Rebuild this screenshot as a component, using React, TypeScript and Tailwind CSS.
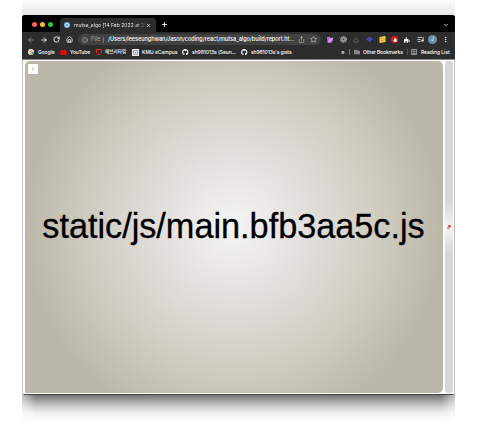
import type { ReactNode } from 'react';
import { FaGithub, FaYoutube, FaFolder, FaPuzzlePiece, FaHandPaper } from 'react-icons/fa';
import { FcGoogle } from 'react-icons/fc';
import { ArrowLeft, ArrowRight, RotateCw, House, Info, Share, Star, ChevronDown, ChevronRight, X, Plus, Aperture, Triangle, ListMusic, EllipsisVertical } from 'lucide-react';

function Cell({ w, children }: { w: string; children?: ReactNode }) {
  return <div className={`${w} flex h-full shrink-0 items-center overflow-visible whitespace-nowrap`}>{children}</div>;
}

function TabStrip() {
  return (
    <div className="flex h-[17px] bg-black pl-[10px] pr-[6px]">
      <div className="flex w-[28px] items-center gap-[3px] pt-px">
        <span className="size-[5px] rounded-full bg-[#ff5f57]" />
        <span className="size-[5px] rounded-full bg-[#febc2e]" />
        <span className="size-[5px] rounded-full bg-[#28c840]" />
      </div>
      <div className="mt-[3px] flex h-[14px] w-[96px] items-center rounded-t-[3px] bg-[#2d2d2d] pl-[4px]">
        <svg className="size-[6px] shrink-0" viewBox="0 0 12 12">
          <circle cx="6" cy="6" r="6" fill="#65b4ef" />
          <path d="M6 2L9.5 4v4L6 10L2.5 8V4Z" fill="#e8f7ff" />
          <path d="M6 4L8 5v2L6 8L4 7V5Z" fill="#1787c8" />
        </svg>
        <span className="ml-[4px] w-[72px] whitespace-nowrap bg-linear-to-r from-white from-85% to-[#444] bg-clip-text text-[5.1px] leading-[8px] tracking-[-0.02px] text-transparent">mutsa_algo [14 Feb 2022 at 20</span>
        <X className="size-[5px] shrink-0 text-white" strokeWidth={3} />
      </div>
      <Plus className="ml-[5px] mt-[6px] size-[7px] text-white" strokeWidth={3} />
      <ChevronDown className="ml-auto mt-[7px] size-[6px] text-white" strokeWidth={3} />
    </div>
  );
}

function Toolbar() {
  return (
    <div className="flex h-[15px] items-center pl-[5px] text-white">
      <Cell w="w-[13px]"><ArrowLeft className="size-[8px] text-[#929292]" strokeWidth={2.5} /></Cell>
      <Cell w="w-[13px]"><ArrowRight className="size-[8px]" strokeWidth={2.5} /></Cell>
      <Cell w="w-[13px]"><RotateCw className="size-[7px]" strokeWidth={2.8} /></Cell>
      <Cell w="w-[12px]"><House className="size-[7px]" strokeWidth={2.5} /></Cell>
      <div className="flex h-[11px] w-[243px] shrink-0 items-center rounded-full bg-[#414141] pl-[4px] text-[5.5px] whitespace-nowrap">
        <Cell w="w-[9px]"><Info className="size-[6px] text-[#c0c0c0]" strokeWidth={2.2} /></Cell>
        <Cell w="w-[12px]"><span className="text-[#aaa]">File</span></Cell>
        <span className="h-[6px] w-px bg-[#777]" />
        <span className="ml-[4px] w-[189px] font-medium tracking-[-0.02px]">/Users/leeseunghwan/Jason/coding/react/mutsa_algo/build/report.ht...</span>
        <Share className="ml-px size-[7px] shrink-0 text-[#ccc]" strokeWidth={2} />
        <Star className="ml-[5px] size-[7px] shrink-0 text-[#ddd]" strokeWidth={2.2} />
      </div>
      <div className="ml-[6px] flex items-center">
        <Cell w="w-[13px]">
          <svg className="size-[6px]" viewBox="0 0 12 12"><path d="M0 0h6l1 3 5-2v6L8 12H1Z" fill="#ad73ed" /><path d="M7 3l5-2-4 6-7 4Z" fill="#f4b3f5" /></svg>
        </Cell>
        <Cell w="w-[13px]"><Aperture className="size-[7px] text-[#c8c8c8]" strokeWidth={2.2} /></Cell>
        <Cell w="w-[12.5px]"><Triangle className="size-[6px] text-[#777]" strokeWidth={3} /></Cell>
        <Cell w="w-[13px]"><svg className="size-[7px]" viewBox="0 0 14 14"><path d="M7 1l7 5-7 7-7-7Z" fill="#384cb2" /></svg></Cell>
        <Cell w="w-[12.5px]"><svg className="size-[7px]" viewBox="0 0 14 14"><path d="M1 2L13 0v12L1 14Z" fill="#f3cf48" /><path d="M3 5h4m-3 5 7-3" stroke="#ad8c21" strokeWidth="1.5" /></svg></Cell>
        <Cell w="w-[13px]"><span className="flex size-[7px] items-center justify-center rounded-full bg-[#f01414]"><FaHandPaper className="size-[4px]" /></span></Cell>
        <Cell w="w-[13px]"><FaPuzzlePiece className="size-[6px]" /></Cell>
        <Cell w="w-[11px]"><ListMusic className="size-[7px]" strokeWidth={2.5} /></Cell>
        <Cell w="w-[14px]"><span className="flex size-[9px] items-center justify-center rounded-full bg-[#718e9c] text-[5px]">J</span></Cell>
        <Cell w="w-[8px]"><EllipsisVertical className="size-[7px]" strokeWidth={2.5} /></Cell>
      </div>
    </div>
  );
}

function Bookmarks() {
  return (
    <div className="flex h-[11px] items-center pb-px pl-[6px] text-[5px] font-medium leading-[8px] text-white">
      <Cell w="w-[10px]"><span className="flex size-[6px] items-center justify-center rounded-full bg-white"><FcGoogle className="size-[5px]" /></span></Cell>
      <Cell w="w-[22px]"><span className="tracking-[-0.1px]">Google</span></Cell>
      <Cell w="w-[10px]"><FaYoutube className="size-[7px] text-[#f00]" /></Cell>
      <Cell w="w-[26px]"><span className="tracking-[-0.1px]">YouTube</span></Cell>
      <Cell w="w-[9px]"><svg className="size-[6px]" viewBox="0 0 12 12"><path d="M1 1h10v7L6 12L1 8Z" fill="#541e19" stroke="#d32f22" strokeWidth="2" /></svg></Cell>
      <Cell w="w-[27px]"><span className="text-[4.6px]">에브리타임</span></Cell>
      <Cell w="w-[10px]"><svg className="size-[7px]" viewBox="0 0 14 14"><path d="M0 0h14v14H0Z" fill="#ededed" /><path d="M3 3h8v8H3ZM5 5l4 4m0-4L5 9" fill="none" stroke="#777" strokeWidth="1.2" /></svg></Cell>
      <Cell w="w-[40px]"><span className="tracking-[-0.02px]">KMU eCampus</span></Cell>
      <Cell w="w-[10px]"><FaGithub className="size-[6.5px]" /></Cell>
      <Cell w="w-[49px]"><span className="tracking-[-0.06px]">sh981013s (Seun...</span></Cell>
      <Cell w="w-[10px]"><FaGithub className="size-[6.5px]" /></Cell>
      <Cell w="w-[90px]"><span className="tracking-[-0.1px]">sh981013s's gists</span></Cell>
      <Cell w="w-[8px]"><span className="text-[6px]">»</span></Cell>
      <span className="h-[6px] w-px bg-[#777]" />
      <span className="w-[4px]" />
      <Cell w="w-[9px]"><FaFolder className="size-[6px] text-[#888]" /></Cell>
      <Cell w="w-[44px]"><span className="tracking-[-0.13px]">Other Bookmarks</span></Cell>
      <span className="h-[6px] w-px bg-[#555]" />
      <span className="w-[3px]" />
      <Cell w="w-[10px]"><svg className="size-[6px]" viewBox="0 0 12 12" fill="none" stroke="#c8c8c8" strokeWidth="1.3"><path d="M1 1h10v10H1ZM3 4h6M3 6h6M3 9h6" /></svg></Cell>
      <Cell w="w-[28px]"><span className="tracking-[-0.06px]">Reading List</span></Cell>
    </div>
  );
}

export default function App() {
  return (
    <div className="flex h-[424px] w-[477px] flex-col overflow-hidden bg-white pl-[22px] font-['Inter','Noto_Sans_CJK_KR',sans-serif]">
      <div className="h-[15px] w-[433px] bg-linear-to-b from-[#fcfcfc] to-[#e7e7e7]" />
      <main className="h-[380px] w-[433px] shrink-0 overflow-hidden rounded-[3px] border-b border-[#454545] bg-white">
        <header className="h-[45px] border-b border-[#858585] bg-[#2d2d2d]">
          <TabStrip />
          <Toolbar />
          <Bookmarks />
        </header>
        <div className="flex h-[334px] border-x border-[#bfbfbf] pl-[2px] pt-px">
          <section className="relative flex h-[332px] w-[418px] items-center justify-center rounded-[5px] rounded-bl-none bg-[radial-gradient(circle_209px_at_center,#f4f4f4,#dad7d1_50%,#cecbc0_70%,#bbb7a9)]">
            <button className="absolute left-[3px] top-[3px] flex size-[10px] items-center justify-center rounded-[1px] bg-white text-[#777]">
              <ChevronRight className="size-[6px]" strokeWidth={2.5} />
            </button>
            <h1 className="whitespace-nowrap pb-[2px] pr-px font-['Liberation_Sans',Arial,sans-serif] text-[34.3px] leading-none tracking-[-0.03px] text-black [-webkit-text-stroke:0.3px_black]">static/js/main.bfb3aa5c.js</h1>
          </section>
          <aside className="ml-[2px] flex h-[332px] w-[8px] items-center justify-center rounded-[3px] bg-[linear-gradient(to_bottom,#d6d6d6_0%,#d6d6d6_42%,#f3f3f3_50%,#d6d6d6_58%,#d6d6d6_100%)]">
            <svg className="size-[4px]" viewBox="0 0 4 4"><path d="M1 0h3v2H1Z" fill="#e65849" /><path d="M0 2h3v2H0Z" fill="#ef9b90" /></svg>
          </aside>
        </div>
      </main>
      <div className="h-[29px] w-[433px] bg-[linear-gradient(to_bottom,#757575,#a2a2a2_20%,#cecece_40%,#eeeeee_62%,#fbfbfb_82%,#ffffff)] [mask-image:linear-gradient(to_right,rgba(0,0,0,0.45),black_14px,black_419px,rgba(0,0,0,0.45))]" />
    </div>
  );
}
